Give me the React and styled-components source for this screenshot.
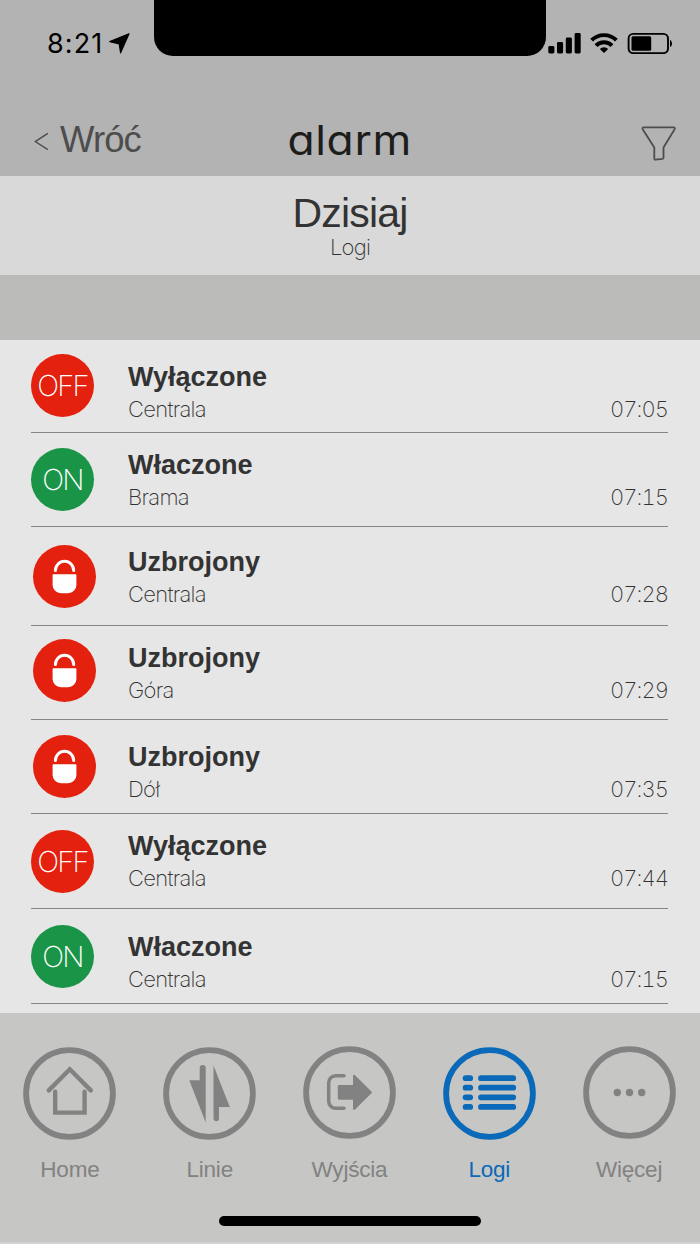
// src/App.jsx
import React from 'react'
import styled, { createGlobalStyle } from 'styled-components'

const GlobalStyle = createGlobalStyle`
  *,
  *::before,
  *::after {
    box-sizing: border-box;
  }

  body {
    margin: 0;
    background: #e6e6e6;
    font-family: 'Liberation Sans', Arial, sans-serif;
  }

  svg {
    display: block;
    flex-shrink: 0;
  }
`

const Screen = styled.div`
  width: 700px;
  height: 1244px;
  display: flex;
  flex-direction: column;
  overflow: hidden;
  background: #e6e6e6;
`

const Header = styled.header`
  height: 176px;
  background: #b3b3b3;
`

const StatusBar = styled.div`
  height: 88px;
  display: grid;
  grid-template-columns: 154px 392px 154px;
  align-items: start;
`

const StatusLeft = styled.div`
  display: flex;
  align-items: center;
  gap: 3px;
  padding: 26px 0 0 47px;
`

const Clock = styled.span`
  width: 59px;
  padding-top: 1px;
  font-family: Inter, sans-serif;
  font-size: 27px;
  line-height: 34px;
  letter-spacing: 1.1px;
  color: #000;
`

const Notch = styled.div`
  height: 56px;
  background: #000;
  border-radius: 0 0 19px 19px;
`

const StatusRight = styled.div`
  display: flex;
  gap: 9px;
  padding: 32px 0 0 2px;
`

const NavBar = styled.nav`
  height: 88px;
  display: grid;
  grid-template-columns: 1fr 1fr 1fr;
  padding: 0 23px 0 34px;
`

const BackButton = styled.button`
  display: flex;
  align-items: center;
  gap: 11px;
  height: 40px;
  margin-top: 32px;
  padding: 0;
  border: none;
  background: transparent;
  color: #4d4d4d;
  font-family: inherit;
  font-size: 36.5px;
  letter-spacing: -0.9px;
`

const Brand = styled.h1`
  margin: 26px -5px 0 -16px;
  text-align: center;
  font-family: Inter, sans-serif;
  font-feature-settings: 'cv11';
  font-weight: 400;
  font-size: 41px;
  line-height: 53px;
  letter-spacing: 0.6px;
  color: #1d1d1b;
  transform: scaleX(1.08);
`

const FilterButton = styled.button`
  justify-self: end;
  align-self: start;
  margin-top: 37px;
  padding: 0;
  border: none;
  background: transparent;
`

const DayHeading = styled.section`
  height: 99px;
  padding-top: 14px;
  background: #d9d9d9;
  text-align: center;
`

const Day = styled.h2`
  margin: 0;
  font-weight: 400;
  font-size: 41px;
  line-height: 46px;
  letter-spacing: -0.8px;
  color: #333;
`

const DayCaption = styled.p`
  margin: -2px 0 0;
  font-family: Inter, sans-serif;
  font-weight: 200;
  font-size: 22px;
  line-height: 26px;
  letter-spacing: -0.8px;
  color: #333;
`

const Band = styled.div`
  height: 65px;
  background: #bbbbb9;
`

const LogList = styled.ul`
  flex: 1;
  margin: 0;
  padding: 0 32px 0 31px;
  list-style: none;
`

const LogRow = styled.li`
  display: grid;
  grid-template-columns: 97px 1fr auto;
  height: ${({ $height }) => $height}px;
  border-bottom: 1px solid #868686;
`

const Badge = styled.span`
  width: 63px;
  height: 63px;
  margin-top: ${({ $top }) => $top}px;
  margin-left: ${({ $kind }) => ($kind === 'lock' ? 2 : 0)}px;
  display: flex;
  align-items: center;
  justify-content: center;
  border-radius: 50%;
  background: ${({ $kind }) => ($kind === 'on' ? '#1a9447' : '#e4200e')};
  color: #fff;
  font-family: Inter, sans-serif;
  font-weight: 200;
  font-size: 29px;
  letter-spacing: -1.7px;
`

const LogText = styled.div`
  padding-top: ${({ $top }) => $top}px;
`

const LogTitle = styled.h3`
  margin: 0;
  font-weight: 700;
  font-size: 27px;
  line-height: 35px;
  color: #333;
`

const LogMeta = styled.p`
  margin: 0;
  font-family: Inter, sans-serif;
  font-weight: 200;
  font-size: 22px;
  font-variant-numeric: tabular-nums;
  line-height: 29px;
  letter-spacing: -0.7px;
  color: #333;
`

const LogTime = styled(LogMeta)`
  padding-top: ${({ $top }) => $top + 35}px;
  letter-spacing: -0.95px;
`

const TabBar = styled.footer`
  height: 231px;
  padding-top: 33px;
  background: #c6c6c4;
  border-bottom: 2px solid #d2d2d0;
`

const Tabs = styled.div`
  display: grid;
  grid-template-columns: repeat(5, 139.8px);
  height: 170px;
`

const Tab = styled.button`
  display: flex;
  flex-direction: column;
  align-items: center;
  padding: 0;
  border: none;
  background: transparent;
  font-family: inherit;
  color: ${({ $active }) => ($active ? '#0a69b8' : '#828282')};

  svg {
    margin-top: ${({ $raised }) => ($raised ? 0 : 1)}px;
  }
`

const TabLabel = styled.span`
  margin-top: ${({ $raised }) => ($raised ? 18 : 17)}px;
  font-size: 22.5px;
  line-height: 26px;
  letter-spacing: -0.2px;
`

const HomeIndicator = styled.div`
  width: 262px;
  height: 10px;
  margin: 0 auto;
  border-radius: 5px;
  background: #000;
`

const LocationArrow = () => (
  <svg width="21" height="21" viewBox="0 0 21 21">
    <path
      d="M20 .7 .8 8.6l9.4 2.2L11.6 19.8z"
      fill="#000"
      stroke="#000"
      strokeWidth="1.2"
      strokeLinejoin="round"
    />
  </svg>
)

const Signal = () => (
  <svg width="33" height="22" viewBox="0 0 33 22" fill="#000">
    <rect x="0.3" y="14" width="6.1" height="7.5" rx="1.4" />
    <rect x="9" y="10" width="6.1" height="11.5" rx="1.4" />
    <rect x="17.8" y="5.6" width="6.1" height="15.9" rx="1.4" />
    <rect x="26.6" y="1" width="6.1" height="20.5" rx="1.4" />
  </svg>
)

const Wifi = () => (
  <svg width="28" height="22" viewBox="0 0 28 22">
    <g fill="none" stroke="#000" strokeWidth="3.9">
      <path d="M1.6 8.2a17.6 17.6 0 0 1 24.8 0" />
      <path d="M6 13.6a11.2 11.2 0 0 1 16 0" />
    </g>
    <path d="M14 20.9l-4.2-4a6.2 6.2 0 0 1 8.4 0z" fill="#000" />
  </svg>
)

const Battery = () => (
  <svg width="46" height="22" viewBox="0 0 46 22">
    <rect
      x="1.6"
      y="1.9"
      width="39.4"
      height="19.2"
      rx="4.6"
      fill="none"
      stroke="#000"
      strokeWidth="1.9"
    />
    <rect x="4.5" y="4.2" width="19.7" height="14.6" rx="1.5" fill="#000" />
    <path d="M43 7.9c2.7 1.2 2.7 6 0 7.2z" fill="#000" />
  </svg>
)

const Chevron = () => (
  <svg width="15" height="22" viewBox="0 0 15 22">
    <path
      d="M13.8 4.4 1.3 12.6l12.5 8.1"
      fill="none"
      stroke="#4d4d4d"
      strokeWidth="1.4"
    />
  </svg>
)

const Funnel = () => (
  <svg width="37" height="37" viewBox="0 0 37 37">
    <path
      d="M3.6 2.4h30.2c1 0 1.4 1 .8 1.8L23.5 22.6v10.2c0 .6-.4.9-1 1l-7 .9c-.7.1-1.2-.3-1.2-.9V22.6L2.7 4.2c-.5-.8-.1-1.8.9-1.8z"
      fill="none"
      stroke="#4d4d4d"
      strokeWidth="1.8"
    />
  </svg>
)

const Lock = () => (
  <svg width="63" height="63" viewBox="0 0 63 63">
    <path
      d="M22.4 25.5a9.15 9.15 0 0 1 18.3 0"
      fill="none"
      stroke="#fff"
      strokeWidth="3"
      strokeLinecap="round"
    />
    <path
      d="M20.4 29.3h22.2c.5 0 .8.3.8.8V40a8.3 8.3 0 0 1-8.3 8.3h-7.2a8.3 8.3 0 0 1-8.3-8.3v-9.9c0-.5.3-.8.8-.8z"
      fill="#fff"
    />
  </svg>
)

const TabIcon = ({ children }) => (
  <svg width="93" height="93" viewBox="0 0 93 93" fill="none">
    <circle
      cx="46.5"
      cy="46.5"
      r="43.4"
      stroke="currentColor"
      strokeWidth="5.8"
    />
    {children}
  </svg>
)

const icons = {
  home: (
    <g stroke="currentColor" strokeWidth="4.4" strokeLinecap="round">
      <path d="M25.8 43.4 46.8 22.3l21 21.1" />
      <path d="M32.2 44.6v21h29.4v-21" />
    </g>
  ),
  lines: (
    <g fill="currentColor">
      <path d="M26.3 33.3h10.4V21a3 3 0 0 1 6 0v54.4z" />
      <path d="M50.5 18.4 66.8 60H56v12a2.8 2.8 0 0 1-5.5 0z" />
    </g>
  ),
  exit: (
    <>
      <path
        d="M41 29.7h-8.3a7 7 0 0 0-7 7v18.6a7 7 0 0 0 7 7H41"
        stroke="currentColor"
        strokeWidth="3.5"
        strokeLinecap="round"
      />
      <path
        d="M36 40.2h15.2V30L67.6 46.3 51.2 62.6v-10H36z"
        fill="currentColor"
        stroke="currentColor"
        strokeWidth="2.4"
        strokeLinejoin="round"
      />
    </>
  ),
  logs: (
    <path
      d="M22.6 31.2h4.6M38 31.2h32.2M22.6 40.7h4.6M38 40.7h32.2M22.6 50.3h4.6M38 50.3h32.2M22.6 59.9h4.6M38 59.9h32.2"
      stroke="currentColor"
      strokeWidth="5.8"
      strokeLinecap="round"
    />
  ),
  more: (
    <g fill="currentColor">
      <circle cx="34.3" cy="46.5" r="3.7" />
      <circle cx="46.5" cy="46.5" r="3.7" />
      <circle cx="58.7" cy="46.5" r="3.7" />
    </g>
  ),
}

const badgeContent = { off: 'OFF', on: 'ON', lock: <Lock /> }

const logs = [
  { kind: 'off', title: 'Wyłączone', place: 'Centrala', time: '07:05', height: 93, badgeTop: 14, textTop: 20 },
  { kind: 'on', title: 'Właczone', place: 'Brama', time: '07:15', height: 94, badgeTop: 15, textTop: 15 },
  { kind: 'lock', title: 'Uzbrojony', place: 'Centrala', time: '07:28', height: 99, badgeTop: 18, textTop: 18 },
  { kind: 'lock', title: 'Uzbrojony', place: 'Góra', time: '07:29', height: 94, badgeTop: 13, textTop: 15 },
  { kind: 'lock', title: 'Uzbrojony', place: 'Dół', time: '07:35', height: 94, badgeTop: 15, textTop: 20 },
  { kind: 'off', title: 'Wyłączone', place: 'Centrala', time: '07:44', height: 95, badgeTop: 16, textTop: 15 },
  { kind: 'on', title: 'Właczone', place: 'Centrala', time: '07:15', height: 95, badgeTop: 16, textTop: 21 },
]

const tabs = [
  { icon: 'home', label: 'Home' },
  { icon: 'lines', label: 'Linie' },
  { icon: 'exit', label: 'Wyjścia', raised: true },
  { icon: 'logs', label: 'Logi', active: true },
  { icon: 'more', label: 'Więcej', raised: true },
]

const App = () => {
  return (
    <Screen>
      <GlobalStyle />
      <Header>
        <StatusBar>
          <StatusLeft>
            <Clock>8:21</Clock>
            <LocationArrow />
          </StatusLeft>
          <Notch />
          <StatusRight>
            <Signal />
            <Wifi />
            <Battery />
          </StatusRight>
        </StatusBar>
        <NavBar>
          <BackButton>
            <Chevron />
            Wróć
          </BackButton>
          <Brand>alarm</Brand>
          <FilterButton aria-label="Filtr">
            <Funnel />
          </FilterButton>
        </NavBar>
      </Header>

      <DayHeading>
        <Day>Dzisiaj</Day>
        <DayCaption>Logi</DayCaption>
      </DayHeading>
      <Band />

      <LogList>
        {logs.map((log, i) => (
          <LogRow key={i} $height={log.height}>
            <Badge $kind={log.kind} $top={log.badgeTop}>
              {badgeContent[log.kind]}
            </Badge>
            <LogText $top={log.textTop}>
              <LogTitle>{log.title}</LogTitle>
              <LogMeta>{log.place}</LogMeta>
            </LogText>
            <LogTime $top={log.textTop}>{log.time}</LogTime>
          </LogRow>
        ))}
      </LogList>

      <TabBar>
        <Tabs>
          {tabs.map(({ icon, label, active, raised }) => (
            <Tab key={icon} $active={active} $raised={raised}>
              <TabIcon>{icons[icon]}</TabIcon>
              <TabLabel $raised={raised}>{label}</TabLabel>
            </Tab>
          ))}
        </Tabs>
        <HomeIndicator />
      </TabBar>
    </Screen>
  )
}

export default App
